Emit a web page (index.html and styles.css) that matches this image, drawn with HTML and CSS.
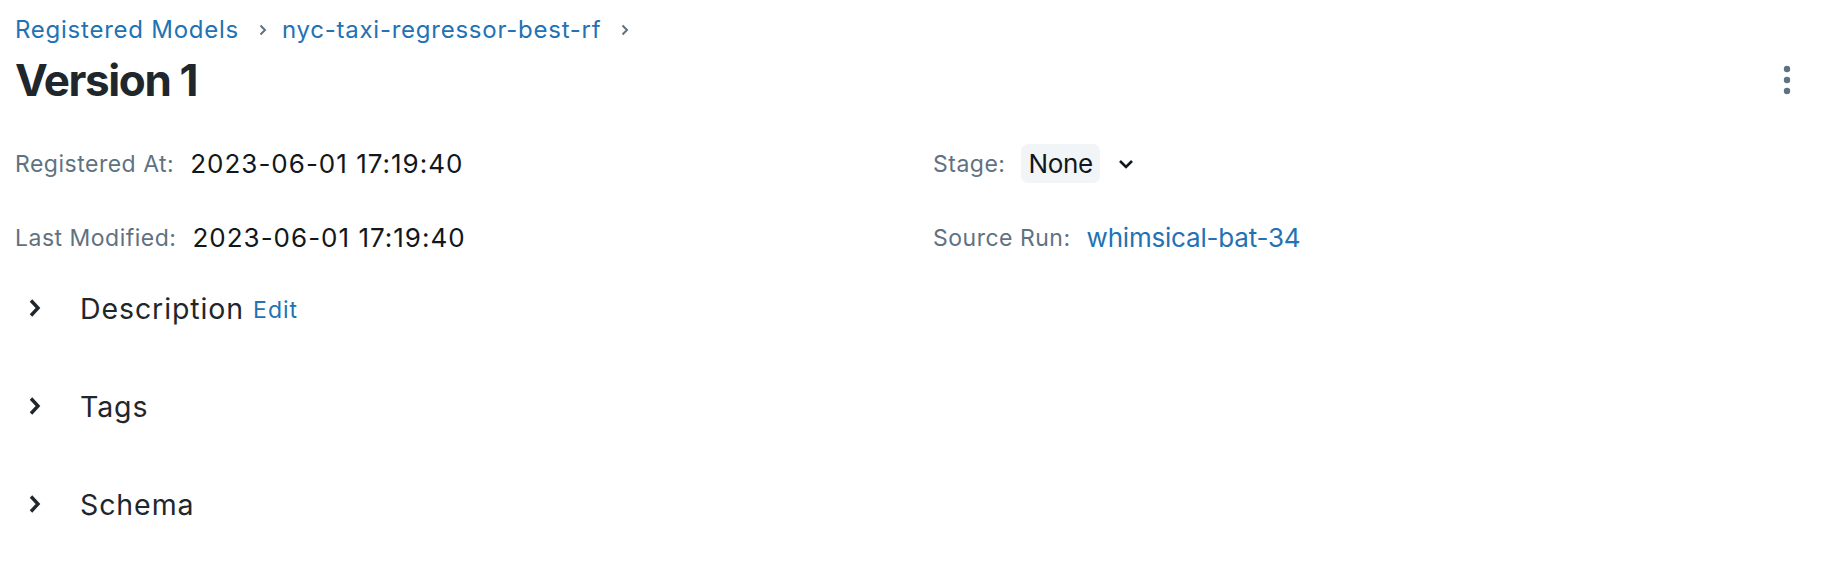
FILE: index.html
```html
<!DOCTYPE html>
<html lang="en">
<head>
<meta charset="utf-8">
<title>Version 1</title>
<link rel="stylesheet" href="styles.css">
</head>
<body>
<div class="page">
  <nav class="breadcrumb">
    <a class="crumb" href="#">Registered Models</a>
    <svg class="sep" width="8" height="12" viewBox="0 0 8 12"><path d="M1.5 1.5 L6 6 L1.5 10.5" fill="none" stroke="#5f7281" stroke-width="2"/></svg>
    <a class="crumb" href="#">nyc-taxi-regressor-best-rf</a>
    <svg class="sep" width="8" height="12" viewBox="0 0 8 12"><path d="M1.5 1.5 L6 6 L1.5 10.5" fill="none" stroke="#5f7281" stroke-width="2"/></svg>
  </nav>
  <header class="title-row">
    <h1 class="title">Version 1</h1>
    <button class="kebab" aria-label="More">
      <svg width="8" height="30" viewBox="0 0 8 30"><circle cx="4" cy="4" r="3.2" fill="#5f7281"/><circle cx="4" cy="15" r="3.2" fill="#5f7281"/><circle cx="4" cy="26" r="3.2" fill="#5f7281"/></svg>
    </button>
  </header>
  <section class="meta">
    <div class="meta-item">
      <span class="label">Registered At:</span>
      <span class="value date">2023-06-01 17:19:40</span>
    </div>
    <div class="meta-item">
      <span class="label">Stage:</span>
      <span class="pill">None</span>
      <svg class="chev-down" width="16" height="10" viewBox="0 0 16 10"><path d="M2 2 L8 8 L14 2" fill="none" stroke="#11171c" stroke-width="2.6"/></svg>
    </div>
    <div class="meta-item">
      <span class="label">Last Modified:</span>
      <span class="value date">2023-06-01 17:19:40</span>
    </div>
    <div class="meta-item">
      <span class="label">Source Run:</span>
      <a class="value link" href="#">whimsical-bat-34</a>
    </div>
  </section>
  <section class="sections">
    <div class="section-head">
      <svg class="chev-right" width="14" height="20" viewBox="0 0 14 20"><path d="M3 2.5 L10 10 L3 17.5" fill="none" stroke="#1f272d" stroke-width="3.4"/></svg>
      <span class="section-title">Description</span>
      <a class="edit" href="#">Edit</a>
    </div>
    <div class="section-head">
      <svg class="chev-right" width="14" height="20" viewBox="0 0 14 20"><path d="M3 2.5 L10 10 L3 17.5" fill="none" stroke="#1f272d" stroke-width="3.4"/></svg>
      <span class="section-title">Tags</span>
    </div>
    <div class="section-head">
      <svg class="chev-right" width="14" height="20" viewBox="0 0 14 20"><path d="M3 2.5 L10 10 L3 17.5" fill="none" stroke="#1f272d" stroke-width="3.4"/></svg>
      <span class="section-title">Schema</span>
    </div>
  </section>
</div>
</body>
</html>
```
FILE: styles.css
```css
* { box-sizing: border-box; }
html, body { margin: 0; padding: 0; background: #fff; }
body {
  font-family: Inter, "Noto Sans", "Liberation Sans", sans-serif;
  color: #11171c;
}
a { text-decoration: none; color: #2272b4; }
.page { padding: 14px 15px 0 15px; }

.breadcrumb {
  display: flex;
  align-items: center;
  height: 32px;
  font-size: 24px;
  line-height: 32px;
  letter-spacing: 0.75px;
}
.sep { margin: 0 15px 0 20px; }

.title-row {
  display: flex;
  align-items: center;
  justify-content: space-between;
  margin-top: 4px;
}
.title {
  margin: 0;
  font-size: 44px;
  line-height: 60px;
  font-weight: 700;
  letter-spacing: -1.4px;
  color: #1f272d;
}
.kebab {
  border: 0;
  background: none;
  padding: 0;
  margin-right: 18px;
  display: flex;
}

.meta {
  display: grid;
  grid-template-columns: 918px 1fr;
  row-gap: 35px;
  margin-top: 34px;
}
.meta-item {
  display: flex;
  align-items: center;
  height: 39px;
  gap: 16px;
}
.label { font-size: 23px; letter-spacing: 0.5px; color: #5f7281; }
.value { font-size: 26px; color: #11171c; }
.value.date { letter-spacing: 1px; }
.value.link { color: #2272b4; letter-spacing: -0.2px; }
.pill {
  font-size: 26px;
  letter-spacing: -0.3px;
  background: #f2f5f7;
  border-radius: 7px;
  height: 39px;
  line-height: 39px;
  padding: 0 7px;
}
.chev-down { margin-left: 2px; }

.sections {
  display: flex;
  flex-direction: column;
  gap: 58px;
  margin-top: 31px;
}
.section-head {
  display: flex;
  align-items: center;
  height: 40px;
  padding-left: 13px;
}
.chev-right { margin-right: 38px; }
.section-title { font-size: 28.5px; letter-spacing: 0.9px; color: #1f272d; }
.edit { font-size: 23px; letter-spacing: 1px; margin-left: 9px; padding-top: 3px; }
```
